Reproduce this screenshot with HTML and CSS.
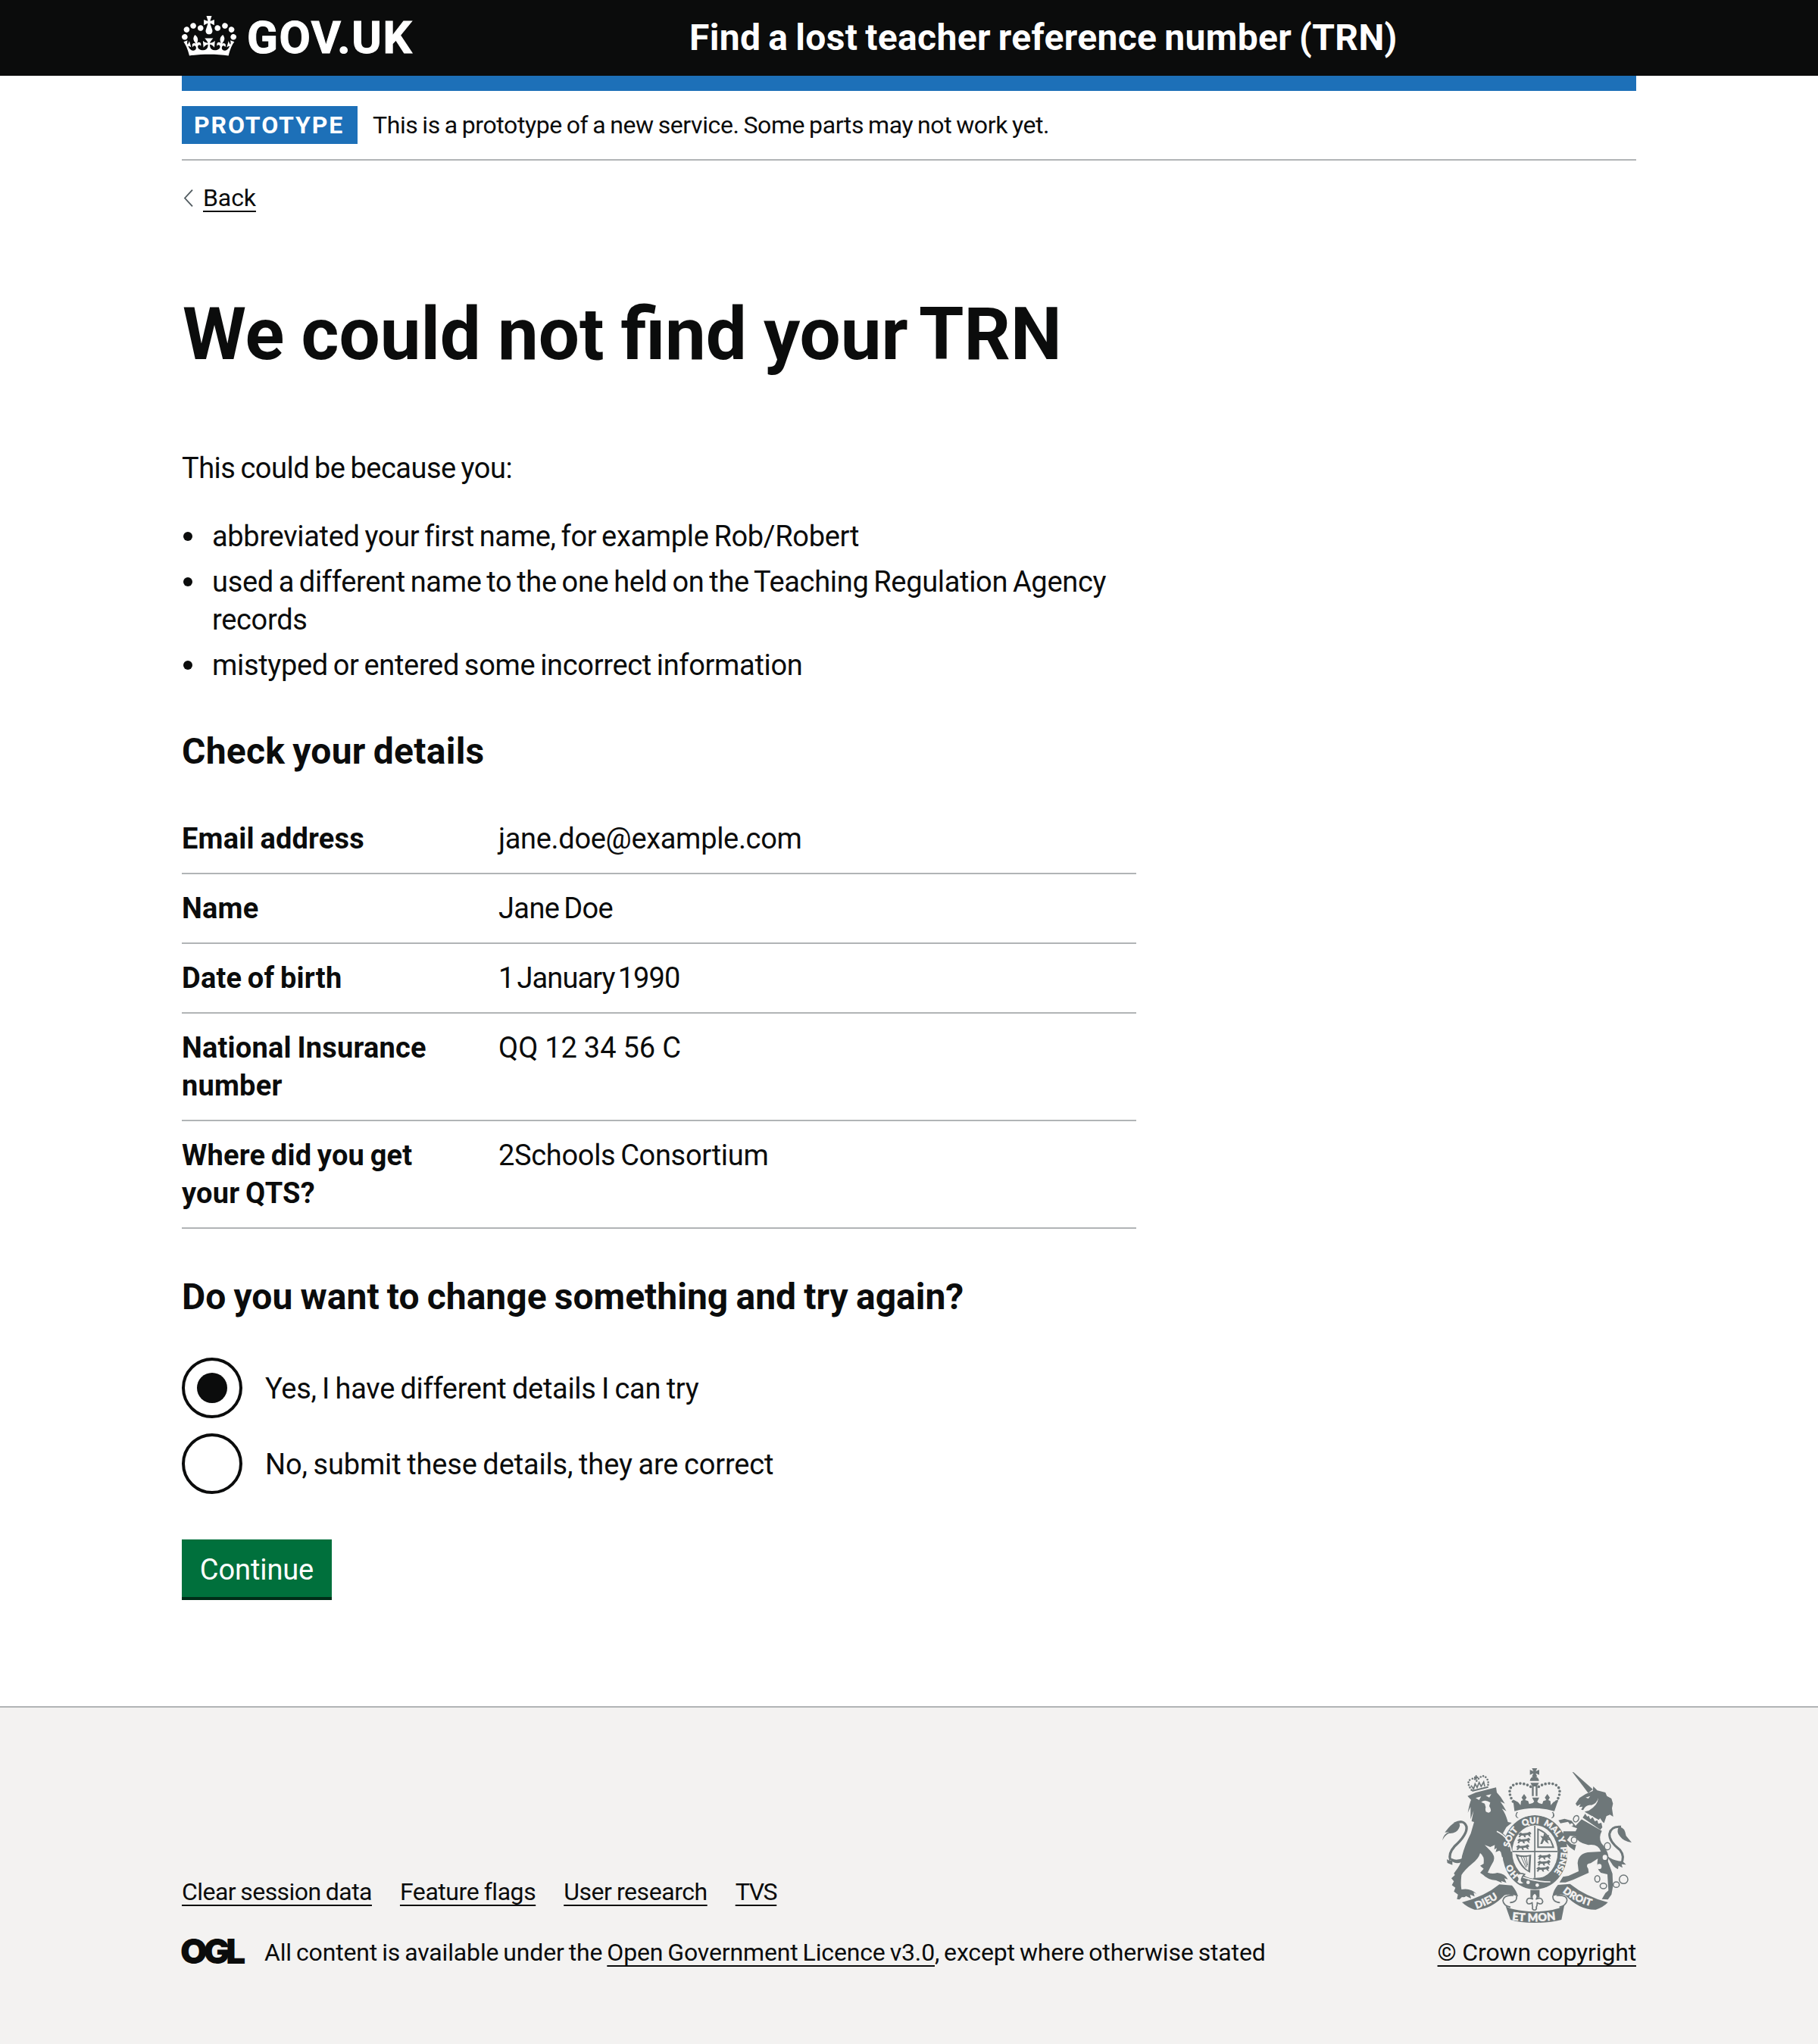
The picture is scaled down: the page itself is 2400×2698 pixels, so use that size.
FILE: index.html
```html
<!DOCTYPE html>
<html lang="en">
<head>
<meta charset="utf-8">
<title>We could not find your TRN</title>
<link rel="stylesheet" href="styles.css">
</head>
<body>
<header class="header">
  <div class="container header-row">
    <a class="logo" href="#">
      <svg class="crown" viewBox="0 0 132 97" aria-hidden="true"><path fill="currentColor" fill-rule="evenodd" d="M25 30.2c3.5 1.5 7.7-.2 9.1-3.7 1.5-3.6-.2-7.8-3.9-9.2-3.6-1.4-7.6.3-9.1 3.9-1.4 3.5.3 7.5 3.9 9zM9 39.5c3.6 1.5 7.8-.2 9.2-3.7 1.5-3.6-.2-7.8-3.9-9.1-3.6-1.5-7.6.2-9.1 3.8-1.4 3.5.3 7.5 3.8 9zM4.4 57.2c3.5 1.5 7.7-.2 9.1-3.8 1.5-3.6-.2-7.7-3.9-9.1-3.5-1.5-7.6.3-9.1 3.8-1.4 3.5.3 7.6 3.9 9.1zm38.3-21.4c3.5 1.5 7.7-.2 9.1-3.8 1.5-3.6-.2-7.7-3.9-9.1-3.6-1.5-7.6.3-9.1 3.8-1.3 3.6.4 7.7 3.9 9.1zm64.4-5.6c-3.6 1.5-7.8-.2-9.1-3.7-1.5-3.6.2-7.8 3.8-9.2 3.6-1.4 7.7.3 9.2 3.9 1.3 3.5-.4 7.5-3.9 9zm15.9 9.3c-3.6 1.5-7.7-.2-9.1-3.7-1.5-3.6.2-7.8 3.7-9.1 3.6-1.5 7.7.2 9.2 3.8 1.5 3.5-.3 7.5-3.8 9zm4.7 17.7c-3.6 1.5-7.8-.2-9.2-3.8-1.5-3.6.2-7.7 3.9-9.1 3.6-1.5 7.7.3 9.2 3.8 1.3 3.5-.4 7.6-3.9 9.1zM89.3 35.8c-3.6 1.5-7.8-.2-9.2-3.8-1.4-3.6.2-7.7 3.9-9.1 3.6-1.5 7.7.3 9.2 3.8 1.4 3.6-.3 7.7-3.9 9.1zM69.7 17.7l8.9 4.7V9.3l-8.9 2.8c-.2-.3-.5-.6-.9-.9L72.4 0H59.6l3.5 11.2c-.3.3-.6.5-.9.9l-8.8-2.8v13.1l8.8-4.7c.3.3.6.7.9.9l-5 15.4v.1c-.2.8-.4 1.6-.4 2.4 0 4.1 3.1 7.5 7 8.1h.2c.3 0 .7.1 1 .1.4 0 .7 0 1-.1h.2c4-.6 7.1-4.1 7.1-8.1 0-.8-.1-1.7-.4-2.4V34l-5.1-15.4c.4-.2.7-.6 1-.9zM66 92.8c16.9 0 32.8 1.1 47.1 3.2 4-16.9 8.9-26.7 14-33.5l-9.6-3.4c1 4.9 1.1 7.2 0 10.2-1.5-1.4-3-4.3-4.2-8.7L108.6 76c2.8-2 5-3.2 7.5-3.3-4.4 9.4-10 11.9-13.6 11.2-4.3-.8-6.3-4.6-5.6-7.9 1-4.7 5.7-5.9 8-.5 4.3-8.7-3-11.4-7.6-8.8 7.1-7.2 7.9-13.5 2.1-21.1-8 6.1-8.1 12.3-4.5 20.8-4.7-5.4-12.1-2.5-9.5 6.2 3.4-5.2 7.9-2 7.2 3.1-.6 4.3-6.4 7.8-13.5 7.2-10.3-.9-10.9-8-11.2-13.8 2.5-.5 7.1 1.8 11 7.3L80.2 60c-4.1 4.4-8 5.3-12.3 5.4 1.4-4.4 8-11.6 8-11.6H55.5s6.4 7.2 7.9 11.6c-4.2-.1-8-1-12.3-5.4l1.4 16.4c3.9-5.5 8.5-7.7 10.9-7.3-.3 5.8-.9 12.8-11.1 13.8-7.2.6-12.9-2.9-13.5-7.2-.7-5 3.8-8.3 7.1-3.1 2.7-8.7-4.6-11.6-9.4-6.2 3.7-8.5 3.6-14.7-4.6-20.8-5.8 7.6-5 13.9 2.2 21.1-4.7-2.6-11.9.1-7.7 8.8 2.3-5.5 7.1-4.2 8.1.5.7 3.3-1.3 7.1-5.7 7.9-3.5.7-9-1.8-13.5-11.2 2.5.1 4.7 1.3 7.5 3.3l-4.7-15.4c-1.2 4.4-2.7 7.2-4.3 8.7-1.1-3-.9-5.3 0-10.2l-9.5 3.4c5 6.9 9.9 16.7 14 33.5 14.8-2.1 30.8-3.2 47.7-3.2z"/></svg>
      <span class="logo-text">GOV.UK</span>
    </a>
    <a class="service-name" href="#">Find a lost teacher reference number (TRN)</a>
  </div>
</header>

<div class="container">
  <div class="header-bar"></div>
  <div class="phase-banner">
    <strong class="tag">PROTOTYPE</strong>
    <span class="phase-text">This is a prototype of a new service. Some parts may not work yet.</span>
  </div>
  <a class="back-link" href="#"><svg class="chevron" viewBox="0 0 13 23" aria-hidden="true"><path d="M12 .6 2 11.500 12 22.400" fill="none" stroke="#505a5f" stroke-width="1.800"/></svg><span class="link">Back</span></a>

  <main class="main">
    <h1 class="title">We could not find <span class="title-end">your TRN</span></h1>
    <p class="body-text">This could be because you:</p>
    <ul class="reasons">
      <li><span>abbreviated your first name, for example Rob/Robert</span></li>
      <li><span>used a different name to the one held on the Teaching Regulation Agency records</span></li>
      <li><span>mistyped or entered some incorrect information</span></li>
    </ul>

    <h2 class="heading heading-details">Check your details</h2>
    <dl class="summary">
      <div class="row"><dt>Email address</dt><dd>jane.doe@example.com</dd></div>
      <div class="row"><dt>Name</dt><dd class="name">Jane Doe</dd></div>
      <div class="row"><dt>Date of birth</dt><dd class="date">1 January 1990</dd></div>
      <div class="row"><dt>National Insurance number</dt><dd class="nino">QQ 12 34 56 C</dd></div>
      <div class="row"><dt>Where did you get your QTS?</dt><dd>2Schools Consortium</dd></div>
    </dl>

    <h2 class="heading heading-question">Do you want to change something and try again?</h2>
    <div class="radios">
      <label class="radio"><span class="dial dial-on"></span><span class="radio-text">Yes, I have different details I can try</span></label>
      <label class="radio radio-no"><span class="dial"></span><span class="radio-text">No, submit these details, they are correct</span></label>
    </div>
    <button class="button" type="button">Continue</button>
  </main>
</div>

<footer class="footer">
  <div class="container footer-row">
    <div class="footer-meta">
      <nav class="footer-links">
        <a class="link link-clear" href="#">Clear session data</a>
        <a class="link" href="#">Feature flags</a>
        <a class="link" href="#">User research</a>
        <a class="link link-tvs" href="#">TVS</a>
      </nav>
      <div class="licence">
        <span class="ogl">OGL</span>
        <span class="licence-text">All content is available under the <a class="link" href="#">Open Government Licence v3.0</a>, except where otherwise stated</span>
      </div>
    </div>
    <div class="copyright">
      <svg class="arms" viewBox="72 72 750 612" aria-hidden="true">
        <defs>
          <path id="garter" d="M439 519A103 114 0 0 1 439 291A103 114 0 0 1 439 519"/>
          <path id="ribbon-left" d="M208 629Q262 612 322 566"/>
          <path id="ribbon-mid" d="M348 673Q438 685 534 670"/>
          <path id="ribbon-right" d="M548 562Q600 606 690 627"/>
          <g id="walker"><path d="M0 8l8-6 7 4 20-2 10-5 6 8-6 5 4 8-6-2-6-6-10 2 2 8-6-1-4-7-9 1-4 7-6-2 4-7-6-4z"/></g>
        </defs>
        <g fill="#6e7779">
          <!-- lion -->
          <path d="M172 182L205 168 285 148 288 168Q305 185 320 212L302 204Q315 222 326 242L308 232Q322 250 332 285L347 288 326 305 312 330 335 352Q345 370 349 400L344 430 333 418 329 431 319 418 309 425 304 404 298 398 283 404 288 388 278 394 280 376 262 384 240 376 262 398Q284 420 275 440 262 462 252 485 270 492 290 486 322 490 332 512L318 508 326 526 305 518 308 526 285 516Q250 512 234 494L222 486 236 470 222 458 236 450Q240 420 222 408 216 430 190 450 160 475 148 495 144 530 148 552 185 545 208 570L196 564 200 580 182 572 186 588 166 578Q160 585 150 582L140 592 130 590 134 572 118 560 124 545 110 535 118 520 108 508 122 495 118 488Q150 450 150 420 160 380 185 330L198 285 188 282 196 240 184 274 184 225 173 248Q180 210 186 197Z"/>
          <path d="M112 455L92 447 90 432Q98 440 108 436L100 428 112 430Q128 440 158 426L152 440Q132 455 112 442Z"/>
          <path d="M72 358Q78 330 100 325L82 326Q108 292 125 286 150 288 138 310 128 332 98 330 82 338 72 358Z"/>
          <!-- unicorn -->
          <path d="M587 87L592 88 668 155 650 170Z"/>
          <path d="M600 212L615 190 640 174 668 162 670 144 686 160 718 168 724 182 742 192 748 212 744 230 749 264 736 256 722 262 712 292 697 270 684 286 668 262 648 262 636 244 652 240Q688 220 690 190 682 215 662 218 640 216 630 238L622 236 628 224 614 226 620 214 606 222Z"/>
          <path d="M624 274L704 320Q690 346 702 368 738 410 728 440L746 490 748 540 742 572 728 592 704 590 718 566 730 556 726 492 700 486Q680 470 688 430L660 448Q636 450 650 470L652 486 590 514 560 524 536 524 550 502 572 498 612 480 608 448Q610 412 648 405L700 402Q690 370 650 376 606 366 600 342L578 340 566 356 584 372 602 376 596 398 576 384 560 366 546 344 552 322 600 322 606 310 584 302 570 284 540 290 532 278 556 272 584 280 600 300Z"/>
          <path d="M770 306Q794 302 800 340L822 366Q790 362 776 342 760 326 770 306Z"/>
          <path d="M704 390Q728 440 786 440L800 454 782 452 786 466 770 458 768 472Q750 464 742 448Z"/>
          <!-- imperial crown -->
          <path d="M427 72h21l-6 12 14-6v20l-14-6 6 13h-21l6-13-14 6V78l14 6z"/>
          <path d="M419 122a18 18 0 0 1 36 0zM421 130h34l-8 14h-18z"/>
          <path d="M427 144h7v38h-7zM442 144h7v38h-7z"/>
          <path d="M352 196l20 10 10 12 2-16 8-4-6-10 10-14 10 14-6 10 12 4 4 12 14-4 6-6-8-16h28l-8 16 6 6 14 4 4-12 12-4-6-10 10-14 10 14-6 10 8 4 2 16 10-12 20-10-16 46q-80-24-158 0z"/>
          <path d="M421 554h36v30h-36z"/>
          <ellipse cx="439" cy="405" rx="129" ry="147"/>
          <!-- ribbons -->
          <path d="M150 603Q240 580 298 532L348 536Q366 556 372 580L354 574Q330 570 318 575 262 634 200 632 170 622 150 603Z"/>
          <path d="M728 603Q640 580 578 530L530 534Q512 554 508 580L524 574Q546 570 560 575 616 634 680 632 710 622 728 603Z"/>
          <path d="M322 615Q340 636 438 640 536 636 556 612L544 672Q500 684 438 684 376 684 342 672Z"/>
        </g>
        <g fill="none" stroke="#6e7779">
          <path stroke-width="10" d="M120 292Q158 272 168 304 172 335 120 382 95 410 104 436"/>
          <path stroke-width="9" d="M780 304Q740 300 734 332 732 362 776 396 798 424 778 452"/>
          <path stroke-width="11" stroke-dasharray="0 14.500" stroke-linecap="round" d="M352 204C320 150 352 128 390 133Q410 136 426 148M524 204C556 150 524 128 486 133Q466 136 450 148"/>
          <path stroke-width="8" stroke-dasharray="0 11" stroke-linecap="round" d="M188 158Q164 126 186 115 202 108 206 124M208 122Q232 92 246 110 260 126 250 148"/>
          <path stroke-width="6" d="M190 162L254 146M206 100v16M198 108h16M370 246q-12 18 4 22M508 246q12 18-4 22"/>
          <path stroke-width="5" d="M186 140l10 14 6-20 8 14 8-20 8 16 10-18 4 18M354 576Q316 572 312 596 314 616 342 622M366 578Q370 602 340 604M524 576Q566 572 566 596 562 616 536 622M510 578Q508 602 538 604"/>
          <g stroke-width="4.500">
            <ellipse cx="602" cy="272" rx="10" ry="13" transform="rotate(25 602 272)"/>
            <ellipse cx="594" cy="356" rx="11" ry="12" fill="#f3f2f1"/><ellipse cx="726" cy="381" rx="12" ry="14" fill="#f3f2f1"/>
            <ellipse cx="686" cy="510" rx="10" ry="13"/><ellipse cx="710" cy="538" rx="13" ry="11"/>
            <ellipse cx="761" cy="533" rx="12" ry="11"/><circle cx="790" cy="512" r="17"/>
          </g>
        </g>
        <g fill="#f3f2f1">
          <path d="M204 190l22-6-8 14zM244 180l22-5-8 13z"/>
          <path d="M226 206q16-12 36 2l-4 14q14 22-2 26-18 0-12-22l-4-14z"/>
          <path d="M640 188l18-6-8 10z"/>
          <path d="M634 244L722 294 712 322 624 274Z"/>
          <ellipse cx="716" cy="425" rx="9" ry="10"/><ellipse cx="694" cy="461" rx="9" ry="10"/>
          <circle cx="584" cy="296" r="6"/>
          <path d="M370 248q70-18 138 0 8 16-10 24-60-28-118 0-20-8-10-24z"/>
          <ellipse cx="439" cy="404" rx="90" ry="106"/>
        </g>
        <g fill="#6e7779">
          <path d="M628 268l10-16 8 12 6-4 6 14 10-8 8 16 10-4 4 14 12-4 4 18-8 10z"/>
          <path d="M436 300h5v206h-5zM350 399h178v5h-178z"/>
          <use href="#walker" x="374" y="324"/><use href="#walker" x="370" y="348"/><use href="#walker" x="366" y="374"/>
          <use href="#walker" x="452" y="412"/><use href="#walker" x="450" y="436"/><use href="#walker" x="446" y="460"/>
          <path d="M448 310q50 14 68 78h-68zm6 8v64h54q-14-48-54-64z" fill-rule="evenodd"/>
          <path d="M460 372l8-22-8-10 12 2 4-14 8 12 12-4-6 12 10 10-12-2 6 16-12-8-6-8-8 16z"/>
          <path d="M362 412q30 10 62 2l-4 72q-40-16-58-74zm10 9q14 38 40 56l4-56q-22 6-44 0z" fill-rule="evenodd"/>
          <path d="M384 422l20 44M394 422l14 40M404 422l6 34" stroke="#6e7779" stroke-width="3"/>
          <path d="M500 494q-30 14-68 12l4 14 60 2z"/>
        </g>
        <path fill="none" stroke="#f3f2f1" stroke-width="5" d="M288 322Q340 348 346 402M386 502Q440 522 500 522"/>
        <g fill="#f3f2f1"><circle cx="412" cy="524" r="7"/><circle cx="448" cy="535" r="7"/></g>
        <path fill="#f3f2f1" stroke="#6e7779" stroke-width="5" d="M398 492q-24-10-34 8 14 6 2 22 16 16 32 4-16-4-12-16t12-18z"/>
        <path fill="#f3f2f1" stroke="#6e7779" stroke-width="5" stroke-linejoin="round" d="M438 566q-16 12-8 24-22-10-24 10 2 12 16 8l6-4q0 14 2 18a8 8 0 1 0 14 0q4-4 4-18l6 4q14 4 16-8-4-20-26-10 10-12-6-24z"/>
        <g class="motto">
          <text><textPath href="#garter" startOffset="70">HO</textPath></text>
          <text><textPath href="#garter" startOffset="190">SOIT</textPath></text>
          <text><textPath href="#garter" startOffset="292">QUI</textPath></text>
          <text><textPath href="#garter" startOffset="374">MAL Y</textPath></text>
          <text><textPath href="#garter" startOffset="490">PENSE</textPath></text>
        </g>
        <g class="motto motto-ribbon">
          <text><textPath href="#ribbon-left">DIEU</textPath></text>
          <text class="motto-mid"><textPath href="#ribbon-mid">ET MON</textPath></text>
          <text><textPath href="#ribbon-right">DROIT</textPath></text>
        </g>
      </svg>
      <a class="link link-crown" href="#">© Crown copyright</a>
    </div>
  </div>
</footer>
</body>
</html>
```
FILE: styles.css
```css
* { box-sizing: border-box; }
body {
  margin: 0;
  background: #fff;
  color: #0b0c0c;
  font-family: Roboto, "Noto Sans", sans-serif;
  font-size: 38px;
  line-height: 50px;
  letter-spacing: -0.32px;
  word-spacing: -2.3px;
}
h1, h2, p, ul, dl, dd { margin: 0; padding: 0; }
a { color: inherit; text-decoration: none; }
.container { width: 1920px; margin: 0 auto; }
.link {
  text-decoration: underline;
  text-decoration-thickness: 2px;
  text-underline-offset: 6px;
  text-decoration-skip-ink: none;
}

.header { background: #0b0c0c; color: #fff; height: 100px; letter-spacing: 0; word-spacing: 0; }
.header-row { display: flex; align-items: center; height: 100px; }
.logo { display: flex; align-items: center; width: 670px; }
.crown { width: 72px; height: 53px; margin: -5px 14px 0 0; }
.logo-text { font-size: 60px; font-weight: 700; line-height: 100px; letter-spacing: 1.6px; -webkit-text-stroke: 1px #fff; }
.service-name { font-size: 48px; font-weight: 700; line-height: 100px; white-space: nowrap; letter-spacing: 0.35px; word-spacing: -2.4px; }

.header-bar { height: 20px; background: #1d70b8; }
.phase-banner {
  display: flex;
  align-items: center;
  padding: 20px 0;
  border-bottom: 2px solid #b1b4b6;
  font-size: 32px;
  letter-spacing: -0.4px;
  word-spacing: -1.6px;
}
.tag { width: 232px; padding-left: 16px; background: #1d70b8; color: #fff; margin-right: 20px; letter-spacing: 1.9px; }
.back-link { display: flex; align-items: center; margin-top: 29px; font-size: 32px; line-height: 40px; letter-spacing: -0.1px; }
.chevron { width: 13px; height: 23px; margin: 0 13px 0 2px; }

.main { width: 1260px; }
.title { margin-top: 110px; padding-left: 1px; font-size: 96px; line-height: 100px; white-space: nowrap; letter-spacing: 0; word-spacing: -1.8px; }
.title-end { word-spacing: -7px; }
.body-text { margin-top: 102px; letter-spacing: -0.5px; word-spacing: -2px; }
.reasons { margin-top: 40px; display: grid; row-gap: 10px; list-style: none; }
.reasons li { display: flex; }
.reasons li::before {
  content: "";
  flex: none;
  width: 12px;
  height: 12px;
  margin: 19px 26px 0 2px;
  border-radius: 50%;
  background: #0b0c0c;
}
.heading { font-size: 48px; line-height: 50px; letter-spacing: 0; word-spacing: 0; }
.heading-details { margin-top: 64px; letter-spacing: 0.25px; word-spacing: -2px; }
.summary { margin-top: 45px; }
.row {
  display: grid;
  grid-template-columns: 378px 1fr;
  column-gap: 40px;
  padding: 20px 0;
  border-bottom: 2px solid #b1b4b6;
}
dt { font-weight: 700; padding-right: 30px; letter-spacing: 0.2px; word-spacing: -2px; }
.name { letter-spacing: -0.6px; word-spacing: -3px; }
.date { letter-spacing: -0.9px; word-spacing: -4.5px; }
.nino { letter-spacing: 0; word-spacing: -0.5px; }
.heading-question { margin-top: 65px; margin-bottom: -1px; word-spacing: -1.7px; }
.radios { margin-top: 56px; display: grid; row-gap: 20px; }
.radio { display: flex; align-items: center; gap: 30px; height: 80px; word-spacing: -1.6px; }
.radio-no { letter-spacing: -0.15px; }
.radio-text { padding-top: 2px; }
.dial {
  width: 80px;
  height: 80px;
  border: 4px solid #0b0c0c;
  border-radius: 50%;
  display: grid;
  place-items: center;
}
.dial-on::after { content: ""; width: 40px; height: 40px; border-radius: 50%; background: #0b0c0c; }
.button {
  display: block;
  width: 198px;
  height: 76px;
  margin-top: 60px;
  padding: 3px 0 0;
  border: 0;
  background: #00703c;
  box-shadow: 0 4px 0 #002d18;
  color: #fff;
  font: inherit;
  letter-spacing: -0.1px;
}

.footer {
  margin-top: 144px;
  height: 446px;
  padding-top: 80px;
  border-top: 2px solid #b1b4b6;
  background: #f3f2f1;
  font-size: 32px;
  line-height: 40px;
  letter-spacing: -0.15px;
  word-spacing: -1.8px;
}
.footer-row { display: flex; justify-content: space-between; align-items: flex-end; }
.footer-links { display: flex; gap: 37px; letter-spacing: -0.45px; word-spacing: -1px; }
.link-clear { letter-spacing: -0.55px; word-spacing: -1.2px; }
.link-tvs { letter-spacing: -1.4px; }
.link-crown { word-spacing: 0; }
.licence { display: flex; margin-top: 40px; }
.ogl {
  width: 109px;
  height: 40px;
  padding-top: 1px;
  font-family: Inter, sans-serif;
  font-weight: 900;
  font-size: 46px;
  line-height: 34px;
  letter-spacing: -5px;
  text-indent: -2px;
}
.copyright { display: flex; flex-direction: column; align-items: center; gap: 19px; }
.arms { width: 250px; height: 204px; overflow: visible; }
.motto {
  font-family: Lato, sans-serif;
  font-weight: 900;
  font-size: 34px;
  letter-spacing: 0;
  word-spacing: 0;
  fill: #f3f2f1;
  stroke: #f3f2f1;
  stroke-width: 1.5px;
}
.motto-ribbon { font-size: 39px; letter-spacing: 1px; }
.motto-mid { font-size: 43px; }
```
